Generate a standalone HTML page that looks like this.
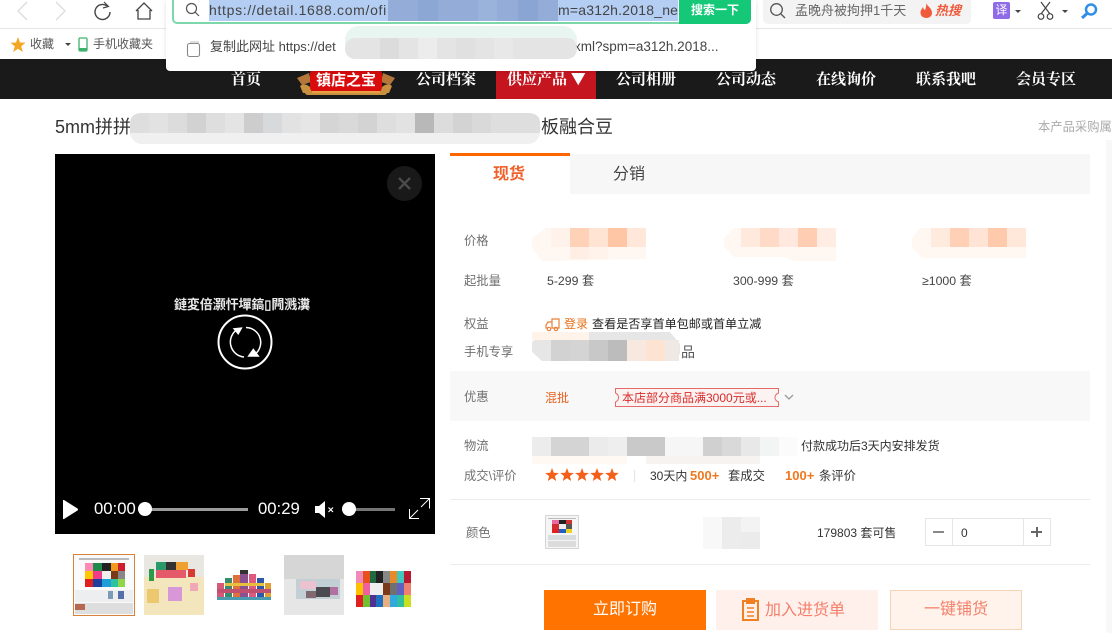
<!DOCTYPE html>
<html><head><meta charset="utf-8"><style>
html,body{margin:0;padding:0;background:#fff;width:1112px;height:644px;overflow:hidden}
body{position:relative;font-family:"Liberation Sans","Noto Sans CJK SC",sans-serif;color:#333}
.a{position:absolute;white-space:nowrap}
.l{position:absolute;left:464px;font-size:12.300px;color:#707070;line-height:16px;white-space:nowrap}
.n{position:absolute;top:70px;font-size:15px;font-weight:bold;color:#fff;line-height:18px;white-space:nowrap;font-family:"Noto Serif CJK SC","Noto Sans CJK SC",sans-serif}
svg{position:absolute;overflow:visible}
</style></head><body>

<!-- browser chrome -->
<div class="a" style="left:0;top:0;width:1112px;height:29px;background:#fff;border-bottom:1px solid #e6e6e6;box-sizing:border-box"></div>
<svg style="left:0;top:0" width="170" height="30" fill="none">
<path d="M27 2L18 11L27 20" stroke="#dcdcdc" stroke-width="1.300"/>
<path d="M56 2L65 11L56 20" stroke="#dcdcdc" stroke-width="1.300"/>
<path d="M107 6A7.500 7.500 0 1 0 110 12" stroke="#444" stroke-width="1.400"/><path d="M104 2L108.500 6.500L103 8" stroke="#444" stroke-width="1.200"/>
<path d="M136 11L144 3L152 11M138 10V19H150V10" stroke="#444" stroke-width="1.300"/>
</svg>
<svg style="left:10px;top:37px" width="16" height="16"><path d="M8 0L10 5.500L15.500 5.700L11.200 9.200L12.800 15L8 11.700L3.200 15L4.800 9.200L.5 5.700L6 5.500Z" fill="#f5a623"/></svg>
<div class="a" style="left:30px;top:36px;font-size:12px;color:#555;line-height:16px">收藏</div>
<div class="a" style="left:65px;top:43px;border:3px solid transparent;border-top:3px solid #444;border-bottom:0"></div>
<svg style="left:78px;top:37px" width="11" height="16" fill="none"><rect x="1" y="1" width="8" height="13" rx="1.200" stroke="#3db26b" stroke-width="1.300"/><rect x="1" y="11" width="8" height="3" fill="#3db26b"/></svg>
<div class="a" style="left:93px;top:36px;font-size:12px;color:#555;line-height:16px">手机收藏夹</div>

<!-- right chrome -->
<div class="a" style="left:763px;top:0;width:208px;height:24px;background:#f3f3f3;border-radius:0 0 5px 5px"></div>
<svg style="left:769px;top:2px" width="18" height="18" fill="none"><circle cx="7.500" cy="7.500" r="5.800" stroke="#555" stroke-width="1.300"/><path d="M12 12L16 16" stroke="#555" stroke-width="1.300"/></svg>
<div class="a" style="left:795px;top:2px;font-size:13px;color:#666;line-height:17px">孟晚舟被拘押1千天</div>
<svg style="left:920px;top:3px" width="13" height="15"><path d="M6 0C7 3 12 5 12 10C12 13 9.500 15 6.500 15C3 15 .5 13 .5 9.500C.5 7 2 6 3 4C3.500 6 4 6.500 5 7C6 5 6.500 3 6 0Z" fill="#ef5a3c"/></svg>
<div class="a" style="left:935px;top:2px;font-size:13px;font-weight:bold;font-style:italic;color:#ef5a3c;line-height:17px">热搜</div>
<div class="a" style="left:993px;top:2px;width:17px;height:17px;background:#8f6be8;border-radius:2px;color:#fff;font-size:12px;line-height:17px;text-align:center">译</div>
<div class="a" style="left:1015px;top:10px;border:3px solid transparent;border-top:3px solid #444;border-bottom:0"></div>
<svg style="left:1037px;top:1px" width="18" height="20" fill="none" stroke="#444" stroke-width="1.200"><path d="M4 1L13 13M13 1L4 13"/><circle cx="4" cy="15.500" r="2.800"/><circle cx="13" cy="15.500" r="2.800"/></svg>
<div class="a" style="left:1062px;top:10px;border:3px solid transparent;border-top:3px solid #444;border-bottom:0"></div>
<svg style="left:1080px;top:2px" width="20" height="18" fill="none"><circle cx="11" cy="7.500" r="5" stroke="#2f8fe8" stroke-width="2.500"/><path d="M7 11.500L2 16" stroke="#2f8fe8" stroke-width="3"/></svg>

<!-- black nav -->
<div class="a" style="left:0;top:59px;width:1112px;height:40px;background:#1a1a1a"></div>
<div class="a" style="left:496px;top:59px;width:100px;height:40px;background:#c5161f"></div>
<div class="n" style="left:231px">首页</div>
<svg style="left:297px;top:68px" width="98" height="28">
<path d="M0 10L12 5L14 14L5 17ZM98 10L86 5L84 14L93 17Z" fill="#b5763a"/>
<path d="M3 18Q8 14 14 20L14 25L6 25ZM95 18Q90 14 84 20L84 25L92 25Z" fill="#c9913f"/>
<rect x="8" y="22" width="82" height="5" rx="2.500" fill="#c9913f"/>
<rect x="13" y="0" width="72" height="25" rx="6" fill="#d80c0c"/>
<rect x="15" y="23" width="68" height="2" fill="#e8a040"/>
<text x="49" y="17" font-size="15" font-weight="bold" fill="#fff" text-anchor="middle" font-family="Liberation Sans,Noto Sans CJK SC,sans-serif">镇店之宝</text>
</svg>
<div class="n" style="left:416px">公司档案</div>
<div class="n" style="left:507px">供应产品 ▼</div>
<div class="n" style="left:616px">公司相册</div>
<div class="n" style="left:716px">公司动态</div>
<div class="n" style="left:816px">在线询价</div>
<div class="n" style="left:916px">联系我吧</div>
<div class="n" style="left:1016px">会员专区</div>

<!-- dropdown -->
<div class="a" style="left:166px;top:0;width:590px;height:71px;background:#fff;border-radius:0 0 4px 4px;box-shadow:0 1px 4px rgba(0,0,0,.12)"></div>
<div class="a" style="left:172px;top:-2px;width:579px;height:26px;box-sizing:border-box;border:2px solid #7ed6ab;border-radius:0 0 5px 5px;background:#fff"></div>
<svg style="left:185px;top:2px" width="16" height="16" fill="none"><circle cx="6.500" cy="6.500" r="5" stroke="#555" stroke-width="1.200"/><path d="M10 10L14 14" stroke="#555" stroke-width="1.200"/></svg>
<div class="a" style="left:209px;top:0;width:469px;height:21px;background:#b3cdf3"></div>
<div class="a" style="left:209px;top:0;font-size:14px;line-height:21px;color:#444;letter-spacing:.68px">https://detail.1688.com/ofi</div>
<div class="a" style="left:558px;top:0;font-size:14px;line-height:21px;color:#444;letter-spacing:.2px">m=a312h.2018_ne</div>
<svg style="left:388px;top:0" width="170" height="22"><rect x="0" width="170" height="21" fill="#93add8"/><rect x="30" width="20" height="21" fill="#8ca7d3"/><rect x="90" width="19" height="21" fill="#9ab3db"/><rect x="130" width="20" height="21" fill="#8aa5d2"/></svg>
<div class="a" style="left:679px;top:0;width:72px;height:24px;background:#14c878;border-radius:0 0 5px 0;color:#fff;font-size:12px;font-weight:bold;line-height:20px;text-align:center">搜索一下</div>
<svg style="left:186px;top:41px" width="16" height="17" fill="none"><rect x="1.500" y="2.500" width="12" height="13" rx="2" stroke="#888" stroke-width="1.100"/><path d="M4 1H13" stroke="#bbb"/></svg>
<div class="a" style="left:210px;top:38px;font-size:13px;line-height:18px;color:#444">复制此网址 https://det</div>
<div class="a" style="left:574px;top:38px;font-size:13.500px;line-height:18px;color:#444">xml?spm=a312h.2018...</div>
<svg style="left:345px;top:26px" width="232" height="34">
<rect x="0" y="0" width="232" height="30" rx="14" fill="#e8f5f1"/>
<rect x="0" y="12" width="232" height="21" rx="10" fill="#e4e4e4"/>
<rect x="35" y="12" width="19" height="21" fill="#dcdcdc"/><rect x="73" y="12" width="19" height="21" fill="#ececec"/><rect x="111" y="12" width="19" height="21" fill="#e0e0e0"/><rect x="149" y="12" width="19" height="21" fill="#e8e8e8"/>
</svg>

<!-- title -->
<div class="a" style="left:55px;top:115px;font-size:18px;line-height:24px;color:#333">5mm拼拼</div>
<div class="a" style="left:523px;top:115px;font-size:18px;line-height:24px;color:#333">拼板融合豆</div>
<div class="a" style="left:1038px;top:119px;font-size:12.300px;line-height:16px;color:#aaa">本产品采购属</div>
<svg style="left:130px;top:112px" width="412" height="33">
<rect x="0" y="1" width="410" height="31" rx="12" fill="#f0f0f0"/>
<path d="M12 1H398Q410 1 410 12V21H0V12Q0 1 12 1Z" fill="#dedede"/>
<rect x="19" y="1" width="19" height="20" fill="#e2e2e2"/><rect x="38" y="1" width="19" height="20" fill="#dcdcdc"/><rect x="57" y="1" width="19" height="20" fill="#d2d2d2"/><rect x="76" y="1" width="19" height="20" fill="#dedede"/><rect x="95" y="1" width="19" height="20" fill="#e4e4e4"/><rect x="114" y="1" width="19" height="20" fill="#cdcdcd"/><rect x="133" y="1" width="19" height="20" fill="#d7d9db"/><rect x="152" y="1" width="19" height="20" fill="#e2e2e2"/><rect x="171" y="1" width="19" height="20" fill="#e6e6e6"/><rect x="190" y="1" width="19" height="20" fill="#d5d5d5"/><rect x="209" y="1" width="19" height="20" fill="#d9d9d9"/><rect x="228" y="1" width="19" height="20" fill="#d3d3d3"/><rect x="247" y="1" width="19" height="20" fill="#dedede"/><rect x="266" y="1" width="19" height="20" fill="#e2e2e2"/><rect x="285" y="1" width="19" height="20" fill="#b8b8b8"/><rect x="304" y="1" width="19" height="20" fill="#dcdcdc"/><rect x="323" y="1" width="19" height="20" fill="#d3d3d3"/><rect x="342" y="1" width="19" height="20" fill="#d9d9d9"/><rect x="361" y="1" width="19" height="20" fill="#dedede"/>
</svg>

<!-- video -->
<div class="a" style="left:55px;top:154px;width:380px;height:380px;background:#000"></div>
<svg style="left:387px;top:166px" width="35" height="35"><circle cx="17.500" cy="17.500" r="17.500" fill="#191919"/><path d="M12 12L23 23M23 12L12 23" stroke="#4a4a4a" stroke-width="2.400"/></svg>
<div class="a" style="left:174px;top:296px;font-size:13px;font-weight:bold;line-height:17px;color:#e8e8e8;letter-spacing:-.1px">鏈変倍灏忓墠鎬▯闁溅瀵</div>
<svg style="left:217px;top:314px" width="56" height="56" fill="none" stroke="#fff">
<circle cx="28" cy="28" r="26.500" stroke-width="2"/>
<path d="M21 15A15 15 0 0 0 27 43" stroke-width="1.500"/><path d="M29 13.500A15 15 0 0 1 37 41" stroke-width="1.500"/>
<path d="M15.700 14.300L25.700 13.300L21.300 21Z" fill="#fff" stroke="none"/><path d="M30.300 42.700L42.700 42.700L36.300 34.300Z" fill="#fff" stroke="none"/>
</svg>
<svg style="left:62px;top:499px" width="17" height="21"><path d="M1 1.500Q1 .5 2 1L15.500 9.500Q16.500 10.500 15.500 11.500L2 20Q1 20.500 1 19.500Z" fill="#fff"/></svg>
<div class="a" style="left:94px;top:499px;font-size:16.700px;line-height:20px;color:#fff">00:00</div>
<div class="a" style="left:145px;top:508px;width:103px;height:3px;background:#9c9c9c"></div>
<div class="a" style="left:138px;top:502px;width:14px;height:14px;background:#fff;border-radius:50%"></div>
<div class="a" style="left:258px;top:499px;font-size:16.700px;line-height:20px;color:#fff">00:29</div>
<svg style="left:315px;top:500px" width="22" height="19"><path d="M0 6H4L10 1V18L4 13H0Z" fill="#fff"/><path d="M13.500 7.500L18 12M18 7.500L13.500 12" stroke="#fff" stroke-width="1.200"/></svg>
<div class="a" style="left:349px;top:508px;width:46px;height:3px;background:#757575"></div>
<div class="a" style="left:342px;top:502px;width:14px;height:14px;background:#fff;border-radius:50%"></div>
<svg style="left:409px;top:498px" width="22" height="22" fill="none" stroke="#fff" stroke-width="1"><path d="M20.500 10.500V.5H11M20.500 .5L12 9M.5 11V20.500H10M.5 20.500L9 12"/></svg>

<!-- thumbnails -->
<svg style="left:73px;top:554px" width="340" height="64" shape-rendering="crispEdges">
<rect x=".5" y=".5" width="61" height="61" fill="#fafafa" stroke="#d9823b"/>
<rect x="6" y="4" width="50" height="2" fill="#bbb"/>
<g transform="translate(12,9)"><rect width="8" height="8" fill="#ff8ab5"/><rect x="8" width="9" height="8" fill="#1e8a4c"/><rect x="17" width="9" height="8" fill="#222"/><rect x="26" width="7" height="8" fill="#f39a1a"/><rect x="33" width="7" height="8" fill="#cc1e2e"/>
<rect y="8" width="8" height="8" fill="#ffc800"/><rect x="8" y="8" width="9" height="8" fill="#f03a8a"/><rect x="17" y="8" width="9" height="8" fill="#eee"/><rect x="26" y="8" width="7" height="8" fill="#7a3a18"/><rect x="33" y="8" width="7" height="8" fill="#888"/>
<rect y="16" width="8" height="8" fill="#e0201e"/><rect x="8" y="16" width="9" height="8" fill="#1f3f9f"/><rect x="17" y="16" width="9" height="8" fill="#1da0d8"/><rect x="26" y="16" width="7" height="8" fill="#2ec2a0"/><rect x="33" y="16" width="7" height="8" fill="#8fd64a"/></g>
<rect x="2" y="36" width="58" height="12" fill="#eceef0"/><rect x="35" y="37" width="5" height="8" fill="#7f9ab8"/><rect x="45" y="37" width="6" height="8" fill="#5570a8"/>
<rect x="2" y="49" width="58" height="11" fill="#dedede"/><rect x="2" y="50" width="10" height="6" fill="#b56a50"/>
<g transform="translate(71,1)"><rect width="60" height="60" fill="#f3e6bc"/><rect y="0" width="60" height="22" fill="#e9e7e2"/><rect x="12" y="7" width="30" height="16" fill="#e45a6a"/><rect x="12" y="7" width="10" height="8" fill="#2a9a6a"/><rect x="22" y="7" width="10" height="8" fill="#333"/><rect x="32" y="7" width="12" height="8" fill="#f0a030"/><rect x="5" y="14" width="5" height="12" fill="#2e9a48"/><rect x="44" y="14" width="7" height="8" fill="#d63a30"/><rect x="24" y="32" width="14" height="14" fill="#d898d8"/><rect x="3" y="34" width="12" height="14" fill="#ecc870"/><rect x="46" y="28" width="8" height="8" fill="#f0a8b8"/></g>
<g transform="translate(144,15)">
<rect x="0" y="14" width="7" height="17" fill="#d65a78"/><rect x="8" y="9" width="7" height="22" fill="#3a8a70"/><rect x="16" y="6" width="7" height="25" fill="#e0703a"/><rect x="23" y="1" width="8" height="30" fill="#8a5090"/><rect x="32" y="5" width="7" height="26" fill="#e05a80"/><rect x="40" y="9" width="7" height="22" fill="#3058a8"/><rect x="48" y="14" width="6" height="17" fill="#e0a030"/>
<rect x="0" y="20" width="54" height="4" fill="#c05070"/><rect x="8" y="14" width="39" height="3" fill="#e8c040"/><rect x="0" y="28" width="54" height="3" fill="#4a9ab0"/><rect x="23" y="1" width="8" height="4" fill="#333"/></g>
<g transform="translate(211,1)"><rect width="60" height="60" fill="#e6e6e6"/><rect y="0" width="60" height="24" fill="#d6d6d7"/><rect x="12" y="24" width="44" height="20" fill="#c2d0d6"/><rect x="16" y="26" width="16" height="8" fill="#ecc2d0"/><rect x="32" y="32" width="14" height="10" fill="#4a4a50"/><rect x="46" y="32" width="8" height="8" fill="#b070a0"/><rect x="22" y="36" width="10" height="7" fill="#806a70"/></g>
<g transform="translate(283,16)"><rect y="1" width="55" height="36" fill="#b8a0a0"/><rect y="1" width="7" height="12" fill="#f08ab8"/><rect x="7" y="1" width="7" height="12" fill="#e8501e"/><rect x="14" y="1" width="6" height="12" fill="#1f6a40"/><rect x="20" y="1" width="7" height="12" fill="#222"/><rect x="27" y="1" width="7" height="12" fill="#888"/><rect x="34" y="1" width="7" height="12" fill="#e88a28"/><rect x="41" y="1" width="7" height="12" fill="#40c8c0"/><rect x="48" y="1" width="7" height="12" fill="#b81830"/>
<rect y="13" width="7" height="12" fill="#ffc000"/><rect x="7" y="13" width="7" height="12" fill="#f060a0"/><rect x="14" y="13" width="13" height="12" fill="#eee"/><rect x="27" y="13" width="7" height="12" fill="#7a3a18"/><rect x="34" y="13" width="7" height="12" fill="#707070"/><rect x="41" y="13" width="7" height="12" fill="#6060c0"/><rect x="48" y="13" width="7" height="12" fill="#f08070"/>
<rect y="25" width="7" height="12" fill="#e02020"/><rect x="7" y="25" width="7" height="12" fill="#70c030"/><rect x="14" y="25" width="6" height="12" fill="#503090"/><rect x="20" y="25" width="7" height="12" fill="#2070c0"/><rect x="27" y="25" width="7" height="12" fill="#e8b080"/><rect x="34" y="25" width="7" height="12" fill="#30a8e0"/><rect x="41" y="25" width="7" height="12" fill="#30c0a0"/><rect x="48" y="25" width="7" height="12" fill="#c8e020"/></g>
</svg>

<!-- tabs -->
<div class="a" style="left:450px;top:154px;width:640px;height:40px;background:#f7f7f7"></div>
<div class="a" style="left:450px;top:153px;width:120px;height:41px;background:#fff;border-top:3px solid #ff6600;box-sizing:border-box"></div>
<div class="a" style="left:493px;top:165px;font-size:16px;font-weight:bold;line-height:20px;color:#f0602a">现货</div>
<div class="a" style="left:613px;top:165px;font-size:16px;line-height:20px;color:#444">分销</div>

<!-- price blur -->
<svg style="left:532px;top:228px" width="500" height="34" shape-rendering="crispEdges">
<path d="M14 0H114V31L19 33H10L0 20V10Z" fill="#fff7f2"/>
<rect x="19" y="0" width="19" height="19" fill="#fff2ea"/><rect x="38" y="0" width="19" height="19" fill="#ffd2b8"/><rect x="57" y="0" width="19" height="19" fill="#ffe3d3"/><rect x="76" y="0" width="19" height="19" fill="#ffc6a6"/><rect x="95" y="0" width="19" height="19" fill="#ffe7da"/>
<rect x="38" y="19" width="19" height="12" fill="#ffeee4"/><rect x="57" y="19" width="19" height="12" fill="#fff3ec"/>
<g transform="translate(192,0)"><path d="M10 0H112V33H70L60 29H10L0 18V10Z" fill="#fff7f2"/><rect x="17" width="19" height="19" fill="#ffe9dd"/><rect x="36" width="19" height="19" fill="#ffdac6"/><rect x="55" width="19" height="19" fill="#ffe9de"/><rect x="74" width="19" height="19" fill="#ffcdb1"/><rect x="93" width="19" height="19" fill="#ffece3"/></g>
<g transform="translate(380,0)"><path d="M8 0H114V30H10L0 20V10Z" fill="#fff7f2"/><rect x="19" width="19" height="19" fill="#ffeade"/><rect x="38" width="19" height="19" fill="#ffd0b6"/><rect x="57" width="19" height="19" fill="#ffe4d6"/><rect x="76" width="19" height="19" fill="#ffc9ab"/><rect x="95" width="19" height="19" fill="#ffe7da"/></g>
</svg>

<div class="l" style="top:233px">价格</div>
<div class="l" style="top:273px">起批量</div>
<div class="a" style="left:547px;top:273px;font-size:12.300px;line-height:16px;color:#444">5-299 套</div>
<div class="a" style="left:733px;top:273px;font-size:12.300px;line-height:16px;color:#444">300-999 套</div>
<div class="a" style="left:922px;top:273px;font-size:12.300px;line-height:16px;color:#444">≥1000 套</div>

<div class="l" style="top:316px">权益</div>
<svg style="left:545px;top:317px" width="16" height="15" fill="none" stroke="#e8803a" stroke-width="1.200"><path d="M7 2H14V11H7ZM7 5H3L1 8V11H3"/><circle cx="4" cy="12" r="1.700"/><circle cx="11" cy="12" r="1.700"/></svg>
<div class="a" style="left:564px;top:316px;font-size:12px;line-height:16px;color:#e8701a;border-bottom:1px solid #e8701a;height:16px">登录</div>
<div class="a" style="left:592px;top:316px;font-size:12.100px;line-height:16px;color:#222">查看是否享首单包邮或首单立减</div>
<div class="l" style="top:344px">手机专享</div>
<div class="a" style="left:681px;top:344px;font-size:14px;line-height:16px;color:#555">品</div>
<svg style="left:532px;top:332px" width="150" height="30" shape-rendering="crispEdges">
<path d="M10 0H138L148 12V22L140 29H10L0 20V10Z" fill="#e6e6e6"/>
<rect x="0" y="0" width="57" height="8" fill="#fff3ea"/>
<rect x="19" y="8" width="19" height="21" fill="#d2d2d2"/><rect x="38" y="8" width="19" height="21" fill="#d4d4d4"/><rect x="57" y="8" width="19" height="21" fill="#c8c8c8"/><rect x="76" y="8" width="19" height="21" fill="#bcbcbc"/><rect x="95" y="8" width="19" height="21" fill="#f7e8e0"/><rect x="114" y="8" width="19" height="21" fill="#fde3d2"/><rect x="133" y="8" width="14" height="21" fill="#efe8e4"/>
</svg>

<!-- promo band -->
<div class="a" style="left:450px;top:371px;width:640px;height:50px;background:#f8f8f8"></div>
<div class="l" style="top:389px">优惠</div>
<div class="a" style="left:545px;top:390px;font-size:12px;line-height:16px;color:#e8601e">混批</div>
<svg style="left:615px;top:388px" width="164" height="19" fill="none"><path d="M.5 .5H163.500V5Q160 6.500 160 9.500Q160 12.500 163.500 14V18.500H.5V14Q3.500 12.500 3.500 9.500Q3.500 6.500 .5 5Z" stroke="#e66a6a" fill="#fbf3f1"/></svg>
<div class="a" style="left:622px;top:389px;width:150px;height:18px;color:#d92b2b;font-size:12px;line-height:18px;overflow:hidden">本店部分商品满3000元或...</div>
<svg style="left:784px;top:394px" width="10" height="7" fill="none"><path d="M1 1L5 5L9 1" stroke="#999" stroke-width="1.300"/></svg>

<!-- logistics -->
<div class="l" style="top:438px">物流</div>
<svg style="left:532px;top:437px" width="270" height="28" shape-rendering="crispEdges">
<rect x="0" y="0" width="265" height="19" fill="#f6f6f6"/>
<rect x="0" width="19" height="19" fill="#ececec"/><rect x="19" width="38" height="19" fill="#d4d4d4"/><rect x="57" width="19" height="19" fill="#ebebeb"/><rect x="76" width="19" height="19" fill="#eeeeee"/><rect x="95" width="38" height="19" fill="#c9c9c9"/><rect x="171" width="19" height="19" fill="#d0d0d0"/><rect x="190" width="19" height="19" fill="#d9d9d9"/><rect x="209" width="19" height="19" fill="#e8e8e8"/><rect x="228" width="19" height="19" fill="#f2f5f3"/><rect x="247" width="18" height="19" fill="#fbfbfb"/>
<rect x="0" y="19" width="95" height="8" fill="#fff8f3"/><rect x="114" y="19" width="114" height="8" fill="#f6f3f1"/>
</svg>
<div class="a" style="left:801px;top:438px;font-size:12px;line-height:16px;color:#333">付款成功后3天内安排发货</div>

<div class="l" style="top:468px">成交\评价</div>
<svg style="left:545px;top:468px" width="75" height="14" fill="#f4601a">
<path d="M7 0L8.800 4.700L13.800 5L9.900 8.100L11.200 13L7 10.300L2.800 13L4.100 8.100L.2 5L5.200 4.700Z"/>
<path transform="translate(15,0)" d="M7 0L8.800 4.700L13.800 5L9.900 8.100L11.200 13L7 10.300L2.800 13L4.100 8.100L.2 5L5.200 4.700Z"/>
<path transform="translate(30,0)" d="M7 0L8.800 4.700L13.800 5L9.900 8.100L11.200 13L7 10.300L2.800 13L4.100 8.100L.2 5L5.200 4.700Z"/>
<path transform="translate(45,0)" d="M7 0L8.800 4.700L13.800 5L9.900 8.100L11.200 13L7 10.300L2.800 13L4.100 8.100L.2 5L5.200 4.700Z"/>
<path transform="translate(60,0)" d="M7 0L8.800 4.700L13.800 5L9.900 8.100L11.200 13L7 10.300L2.800 13L4.100 8.100L.2 5L5.200 4.700Z"/>
</svg>
<div class="a" style="left:634px;top:470px;width:1px;height:12px;background:#e5e5e5"></div>
<div class="a" style="left:650px;top:468px;font-size:12px;line-height:16px;color:#333">30天内</div>
<div class="a" style="left:690px;top:468px;font-size:13px;font-weight:bold;line-height:16px;color:#f07820">500+</div>
<div class="a" style="left:728px;top:468px;font-size:12.300px;line-height:16px;color:#333">套成交</div>
<div class="a" style="left:785px;top:468px;font-size:13px;font-weight:bold;line-height:16px;color:#f07820">100+</div>
<div class="a" style="left:819px;top:468px;font-size:12.300px;line-height:16px;color:#333">条评价</div>

<div class="a" style="left:450px;top:499px;width:640px;height:1px;background:#ececec"></div>
<div class="l" style="top:525px;left:466px">颜色</div>
<svg style="left:545px;top:515px" width="34" height="34" shape-rendering="crispEdges">
<rect x=".5" y=".5" width="33" height="33" fill="#f5f5f5" stroke="#d5d5d5"/>
<rect x="3" y="3" width="28" height="1" fill="#bbb"/>
<rect x="7" y="5" width="20" height="13" fill="#d03030"/><rect x="7" y="5" width="7" height="4" fill="#e86aa0"/><rect x="14" y="5" width="7" height="4" fill="#222"/><rect x="14" y="9" width="7" height="5" fill="#eee"/><rect x="21" y="9" width="6" height="5" fill="#555"/><rect x="7" y="14" width="7" height="4" fill="#e02020"/><rect x="14" y="14" width="7" height="4" fill="#2060c0"/><rect x="21" y="14" width="6" height="4" fill="#f0d020"/>
<rect x="3" y="20" width="28" height="5" fill="#d8dcdf"/><rect x="3" y="26" width="28" height="6" fill="#dcdcdc"/>
</svg>
<svg style="left:703px;top:517px" width="57" height="32" shape-rendering="crispEdges"><rect width="19" height="32" fill="#f8f8f8"/><rect x="19" width="19" height="32" fill="#ececec"/><rect x="38" y="0" width="19" height="15" fill="#f3f3f3"/><rect x="38" y="15" width="19" height="17" fill="#ebebeb"/></svg>
<div class="a" style="left:817px;top:525px;font-size:12px;line-height:16px;color:#333">179803 套可售</div>
<div class="a" style="left:925px;top:518px;width:126px;height:28px;box-sizing:border-box;border:1px solid #e6e6e6;background:#fff"></div>
<div class="a" style="left:952px;top:519px;width:1px;height:26px;background:#e6e6e6"></div>
<div class="a" style="left:1023px;top:519px;width:1px;height:26px;background:#e6e6e6"></div>
<div class="a" style="left:933px;top:531px;width:11px;height:2px;background:#888"></div>
<div class="a" style="left:1031px;top:531px;width:11px;height:2px;background:#666"></div>
<div class="a" style="left:1036px;top:527px;width:2px;height:10px;background:#666"></div>
<div class="a" style="left:961px;top:525px;font-size:12px;line-height:16px;color:#333">0</div>
<div class="a" style="left:450px;top:564px;width:640px;height:1px;background:#ececec"></div>

<!-- buttons -->
<div class="a" style="left:544px;top:590px;width:162px;height:40px;background:#ff7300;color:#fff;font-size:16px;line-height:40px;text-align:center">立即订购</div>
<div class="a" style="left:716px;top:590px;width:162px;height:40px;background:#fff0ec"></div>
<svg style="left:741px;top:598px" width="20" height="24" fill="none" stroke="#f08020" stroke-width="2"><path d="M6 3H2V22H17V3H13"/><rect x="6" y="1" width="7" height="4" fill="#f08020"/><path d="M6 10H13M6 14H13M6 18H13" stroke-width="1.600"/></svg>
<div class="a" style="left:765px;top:601px;font-size:16px;line-height:20px;color:#f4806a">加入进货单</div>
<div class="a" style="left:890px;top:590px;width:132px;height:40px;box-sizing:border-box;border:1px solid #f5d5b8;background:#fff3ec;color:#f4806a;font-size:16px;line-height:38px;text-align:center">一键铺货</div>

<!-- scrollbar strip -->
<div class="a" style="left:1106px;top:140px;width:6px;height:493px;background:#f8f8f8"></div>
</body></html>
